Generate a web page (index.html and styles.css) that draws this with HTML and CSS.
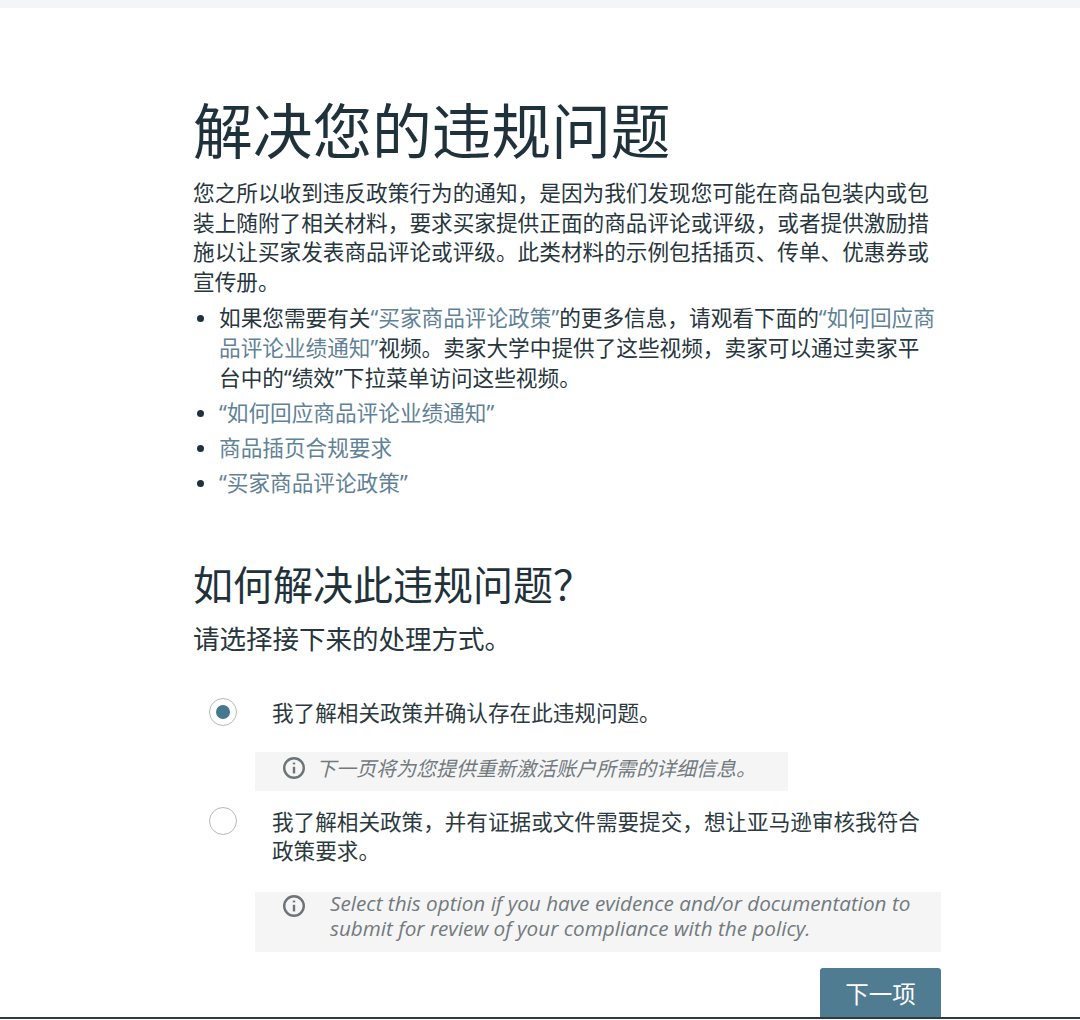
FILE: index.html
```html
<!DOCTYPE html>
<html lang="zh-CN">
<head>
<meta charset="utf-8">
<title>解决您的违规问题</title>
<link rel="stylesheet" href="styles.css">
</head>
<body>
<div class="topbar"></div>
<main class="page">
  <h1 class="title">解决您的违规问题</h1>
  <p class="intro">您之所以收到违反政策行为的通知，是因为我们发现您可能在商品包装内或包装上随附了相关材料，要求买家提供正面的商品评论或评级，或者提供激励措施以让买家发表商品评论或评级。此类材料的示例包括插页、传单、优惠券或宣传册。</p>
  <ul class="links">
    <li>如果您需要有关<a href="#">“买家商品评论政策”</a>的更多信息，请观看下面的<a href="#">“如何回应商品评论业绩通知”</a>视频。卖家大学中提供了这些视频，卖家可以通过卖家平台中的“绩效”下拉菜单访问这些视频。</li>
    <li><a href="#">“如何回应商品评论业绩通知”</a></li>
    <li><a href="#">商品插页合规要求</a></li>
    <li><a href="#">“买家商品评论政策”</a></li>
  </ul>
  <h2 class="subtitle">如何解决此违规问题？</h2>
  <p class="lead">请选择接下来的处理方式。</p>
  <div class="option first">
    <span class="radio checked"></span>
    <span class="option-text">我了解相关政策并确认存在此违规问题。</span>
  </div>
  <div class="note short">
    <svg class="info" viewBox="0 0 24 24" aria-hidden="true"><circle cx="12" cy="12" r="9.8"/><path d="M12 10.8v6.6"/><path d="M12 6.6v1.8"/></svg>
    <span class="note-text zh">下一页将为您提供重新激活账户所需的详细信息。</span>
  </div>
  <div class="option second">
    <span class="radio"></span>
    <span class="option-text">我了解相关政策，并有证据或文件需要提交，想让亚马逊审核我符合政策要求。</span>
  </div>
  <div class="note long">
    <svg class="info" viewBox="0 0 24 24" aria-hidden="true"><circle cx="12" cy="12" r="9.8"/><path d="M12 10.8v6.6"/><path d="M12 6.6v1.8"/></svg>
    <span class="note-text en">Select this option if you have evidence and/or documentation to submit for review of your compliance with the policy.</span>
  </div>
  <div class="actions"><button class="next" type="button">下一项</button></div>
</main>
<div class="bottomline"></div>
</body>
</html>
```

FILE: styles.css
```css
* { box-sizing: border-box; }
html, body { margin: 0; padding: 0; }
body {
  width: 1080px;
  height: 1020px;
  overflow: hidden;
  background: #fff;
  color: #27363d;
  font-family: "Noto Sans", "Noto Sans CJK SC", sans-serif;
  position: relative;
}
.topbar { height: 8px; background: #f3f5f7; }
.page { width: 748px; margin-left: 193px; }
.title {
  margin: 0;
  padding-top: 84px;
  font-size: 59.7px;
  line-height: 78px;
  font-weight: 400;
  color: #1f323b;
}
.intro {
  margin: 8px 0 0;
  font-size: 21.65px;
  line-height: 29.7px;
}
.links { margin: 6px 0 0; padding: 0 2px 0 26px; list-style: none; font-size: 21.65px; line-height: 30px; }
.links li { position: relative; margin-bottom: 5px; }
.links li::before {
  content: "";
  position: absolute;
  left: -22px;
  top: 12px;
  width: 7px;
  height: 7px;
  border-radius: 50%;
  background: #1f323b;
}
.links a { color: #5f8296; text-decoration: none; }
.subtitle {
  margin: 59px 0 0;
  font-size: 40px;
  line-height: 56px;
  font-weight: 400;
  color: #1f323b;
}
.lead { margin: 8px 0 0; font-size: 26.5px; line-height: 36px; }
.option { display: flex; align-items: flex-start; font-size: 21.6px; line-height: 29.7px; }
.option.first { margin-top: 41px; }
.option.second { margin-top: 16px; }
.radio {
  flex: none;
  width: 28px;
  height: 28px;
  margin: 0 35px 0 16px;
  border: 1.5px solid #b4babd;
  border-radius: 50%;
  background: #fff;
  display: flex;
  align-items: center;
  justify-content: center;
}
.radio.checked::after {
  content: "";
  width: 14px;
  height: 14px;
  border-radius: 50%;
  background: #44788f;
}
.option-text { flex: 1; color: #2c3a40; }
.note {
  display: flex;
  align-items: flex-start;
  margin-left: 62px;
  background: #f5f5f5;
  color: #727a7e;
  font-style: italic;
}
.note.short { width: 533px; height: 39px; margin-top: 24px; padding: 3px 0 0 27px; }
.note.long { width: 686px; height: 60px; margin-top: 26px; padding: 0 0 0 27px; }
.info {
  flex: none;
  width: 24px;
  height: 24px;
  margin-top: 1px;
  fill: none;
  stroke: #6d7478;
  stroke-width: 2.4;
  stroke-linecap: butt;
}
.note.long .info { margin-top: 2px; }
.note-text { font-size: 20px; line-height: 25px; }
.note-text.zh { margin-left: 10px; margin-top: 1px; }
.note-text.en { margin-left: 24px; margin-top: -1px; font-family: "Open Sans", sans-serif; font-size: 20.7px; }
.actions { display: flex; justify-content: flex-end; margin-top: 16px; }
.next {
  width: 121px;
  height: 50px;
  border: 0;
  border-radius: 3px 3px 0 0;
  background: #4f7c91;
  color: #fff;
  font-family: inherit;
  font-size: 23.5px;
  padding: 0;
}
.bottomline { position: absolute; left: 0; right: 0; top: 1017px; height: 2px; background: #2f3b44; }
```
